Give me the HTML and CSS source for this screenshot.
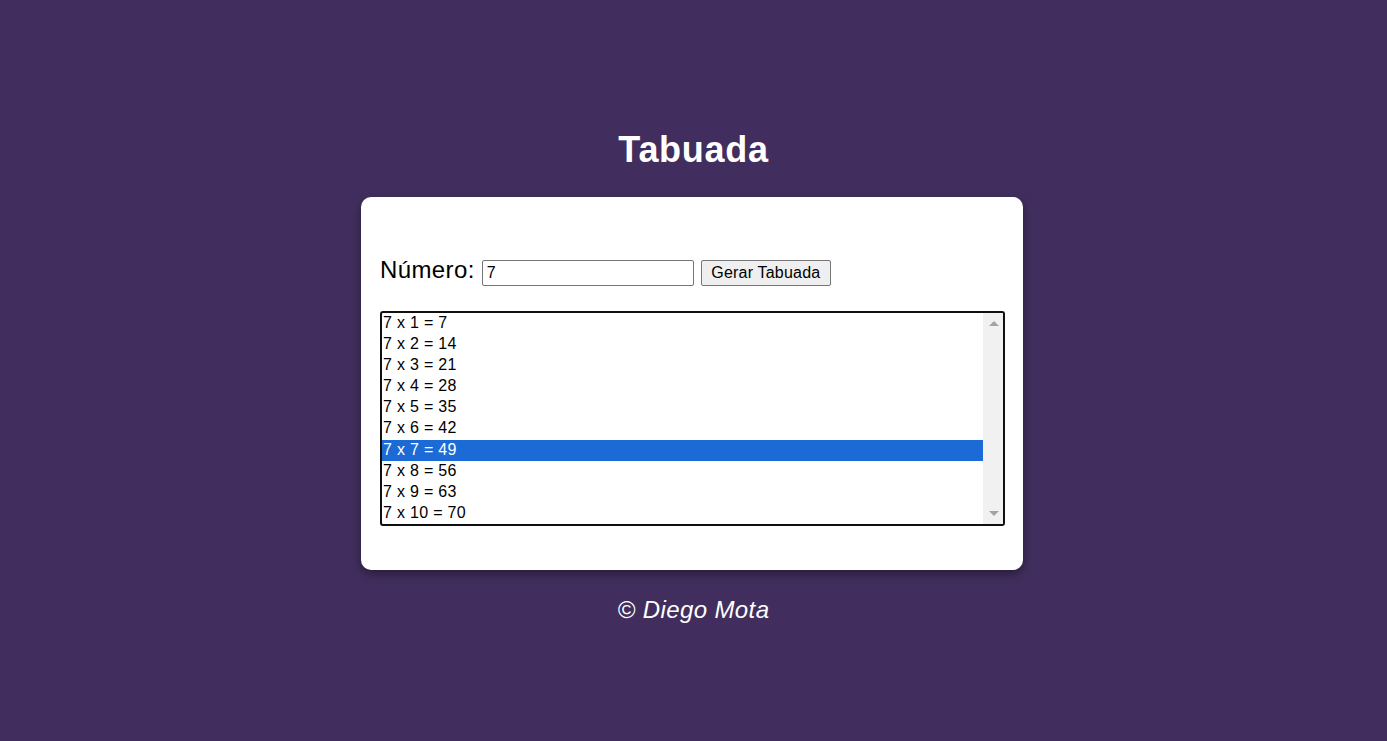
FILE: index.html
```html
<!DOCTYPE html>
<html lang="pt-BR">
<head>
<meta charset="utf-8">
<title>Tabuada</title>
<link rel="stylesheet" href="styles.css">
</head>
<body>
<main class="page">
  <h1 class="title">Tabuada</h1>
  <section class="card">
    <div class="form-row">
      <label class="label" for="num">Número:</label>
      <input class="num-input" id="num" type="text" value="7">
      <button class="btn" type="button">Gerar Tabuada</button>
    </div>
    <div class="listbox">
      <div class="options">
        <div class="opt">7 x 1 = 7</div>
        <div class="opt">7 x 2 = 14</div>
        <div class="opt">7 x 3 = 21</div>
        <div class="opt">7 x 4 = 28</div>
        <div class="opt">7 x 5 = 35</div>
        <div class="opt">7 x 6 = 42</div>
        <div class="opt selected">7 x 7 = 49</div>
        <div class="opt">7 x 8 = 56</div>
        <div class="opt">7 x 9 = 63</div>
        <div class="opt">7 x 10 = 70</div>
      </div>
      <div class="scrollbar">
        <span class="arrow up"></span>
        <span class="arrow down"></span>
      </div>
    </div>
  </section>
  <p class="footer">© Diego Mota</p>
</main>
</body>
</html>
```

FILE: styles.css
```css
html, body {
  margin: 0;
  padding: 0;
}
body {
  background: #412e5e;
  font-family: "Liberation Sans", Arial, sans-serif;
  color: #000;
  min-height: 741px;
}
.page {
  display: flex;
  flex-direction: column;
  align-items: center;
  padding-top: 129px;
}
.title {
  margin: 0 0 26px;
  font-size: 36px;
  line-height: 42px;
  font-weight: bold;
  letter-spacing: 0.7px;
  color: #fff;
}
.card {
  box-sizing: border-box;
  width: 662px;
  margin-right: 3px;
  background: #fff;
  border-radius: 10px;
  box-shadow: 0 4px 10px rgba(0, 0, 0, 0.4);
  padding: 59px 18px 44px 19px;
}
.form-row {
  display: flex;
  align-items: baseline;
  height: 28px;
}
.label {
  font-size: 24px;
  line-height: 28px;
  letter-spacing: 0.4px;
  margin-right: 7px;
}
.num-input {
  box-sizing: border-box;
  width: 212px;
  height: 26px;
  margin: 0 7px 0 0;
  padding: 1px 4px;
  border: 1px solid #767676;
  border-radius: 2px;
  font-family: "Liberation Sans", Arial, sans-serif;
  font-size: 16px;
  color: #000;
  background: #fff;
}
.btn {
  box-sizing: border-box;
  width: 130px;
  height: 26px;
  margin: 0;
  padding: 1px 6px;
  border: 1px solid #767676;
  border-radius: 2px;
  background: #efefef;
  font-family: "Liberation Sans", Arial, sans-serif;
  font-size: 16px;
  letter-spacing: 0.2px;
  color: #000;
}
.listbox {
  box-sizing: border-box;
  display: flex;
  width: 625px;
  height: 215px;
  margin-top: 27px;
  border: 2px solid #101010;
  border-radius: 3px;
  overflow: hidden;
}
.options {
  flex: 1;
  display: flex;
  flex-direction: column;
}
.opt {
  height: 21.2px;
  line-height: 19px;
  font-size: 16px;
  letter-spacing: 0.3px;
  padding: 0 1px;
  white-space: nowrap;
}
.opt.selected {
  background: #1b6ad5;
  color: #fff;
}
.scrollbar {
  position: relative;
  width: 20px;
  background: #f1f1f1;
}
.arrow {
  position: absolute;
  left: 6px;
  width: 0;
  height: 0;
  border-left: 5px solid transparent;
  border-right: 5px solid transparent;
}
.arrow.up {
  top: 8px;
  border-bottom: 5px solid #a3a3a3;
}
.arrow.down {
  bottom: 8px;
  border-top: 5px solid #a3a3a3;
}
.footer {
  margin: 26px 0 0;
  font-size: 24px;
  line-height: 28px;
  font-style: italic;
  letter-spacing: 0.4px;
  color: #fff;
}
```
